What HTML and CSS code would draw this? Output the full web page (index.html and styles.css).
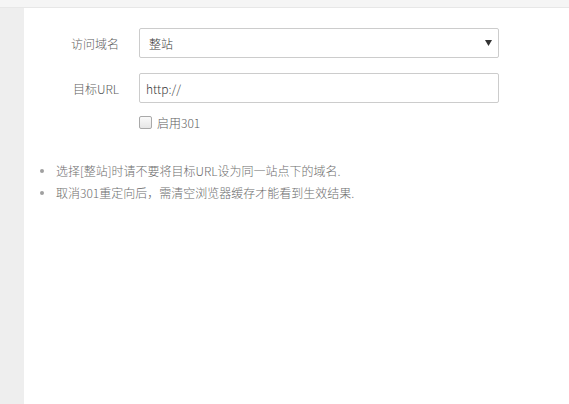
FILE: index.html
```html
<!DOCTYPE html>
<html lang="zh-CN">
<head>
<meta charset="utf-8">
<title>301重定向</title>
<link rel="stylesheet" href="styles.css">
</head>
<body>
<div class="topbar"></div>
<div class="main">
  <aside class="sidebar"></aside>
  <section class="content">
    <div class="form">
      <div class="row">
        <label class="label" for="domain">访问域名</label>
        <div class="select-wrap">
          <select id="domain" class="field select">
            <option>整站</option>
          </select>
          <svg class="arrow" width="7" height="6" viewBox="0 0 7 6"><path d="M0 0H7L3.5 6Z" fill="#333"/></svg>
        </div>
      </div>
      <div class="row">
        <label class="label" for="target">目标URL</label>
        <input id="target" class="field input" type="text" value="http://">
      </div>
      <div class="row check-row">
        <span class="label"></span>
        <label class="check"><input type="checkbox" class="checkbox"><span>启用301</span></label>
      </div>
    </div>
    <ul class="tips">
      <li>选择[整站]时请不要将目标URL设为同一站点下的域名.</li>
      <li>取消301重定向后，需清空浏览器缓存才能看到生效结果.</li>
    </ul>
  </section>
</div>
</body>
</html>
```

FILE: styles.css
```css
* { box-sizing: border-box; }
html, body { margin: 0; padding: 0; height: 100%; }
body {
  background: #fff;
  font-family: "Noto Sans CJK SC", "Noto Sans", sans-serif;
  font-size: 12px;
  font-weight: 300;
  color: #555;
  display: flex;
  flex-direction: column;
}
.topbar {
  height: 8px;
  background: #f5f5f5;
  border-bottom: 1px solid #e7e7e7;
  flex: none;
}
.main {
  flex: 1;
  display: flex;
}
.sidebar {
  width: 24px;
  background: #eeeeee;
  flex: none;
}
.content {
  flex: 1;
  padding-top: 20px;
}
.form {
  display: flex;
  flex-direction: column;
  gap: 15px;
}
.row {
  display: flex;
  align-items: center;
  gap: 20px;
}
.label {
  width: 95px;
  text-align: right;
  color: #5e5e5e;
  font-size: 12px;
}
.select-wrap {
  position: relative;
  width: 360px;
}
.field {
  height: 30px;
  border: 1px solid #cccccc;
  border-radius: 2px;
  background: #fff;
  font-family: "Noto Sans CJK SC", "Noto Sans", sans-serif;
  font-size: 12px;
  font-weight: 300;
  color: #3a3a3a;
  outline: none;
  margin: 0;
}
.select {
  width: 100%;
  appearance: none;
  -webkit-appearance: none;
  padding: 0 24px 0 9px;
}
.arrow {
  position: absolute;
  right: 7px;
  top: 12px;
  pointer-events: none;
}
.input {
  width: 360px;
  padding: 0 6px;
}
.check-row {
  margin-top: -4px;
}
.check {
  display: flex;
  align-items: center;
  gap: 5px;
  color: #5e5e5e;
  font-size: 12px;
}
.checkbox {
  appearance: none;
  -webkit-appearance: none;
  width: 13px;
  height: 13px;
  margin: 0;
  border: 1px solid #a9a9a9;
  border-radius: 2px;
  background: linear-gradient(#fafafa, #e6e6e6);
}
.tips {
  list-style: none;
  margin: 29px 0 0;
  padding: 0 0 0 32px;
  color: #6e6e6e;
  font-size: 12px;
  line-height: 22px;
}
.tips li {
  position: relative;
}
.tips li::before {
  content: "";
  position: absolute;
  left: -16px;
  top: 9px;
  width: 4px;
  height: 4px;
  border-radius: 50%;
  background: #a0a0a0;
}
```
